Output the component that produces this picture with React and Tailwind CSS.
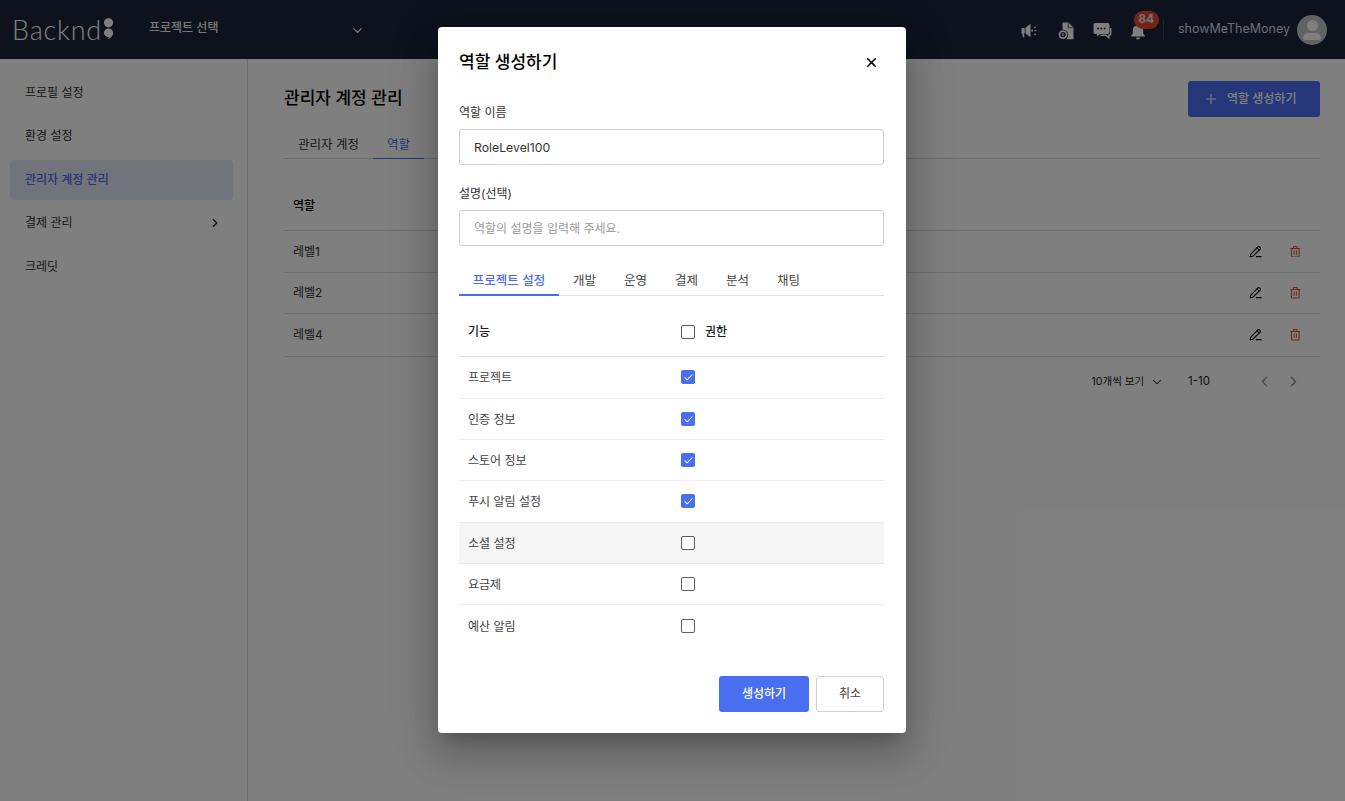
import React from "react";
import { ChevronDown, ChevronRight, ChevronLeft, Plus, X, Check } from "lucide-react";

const Megaphone = () => (
  <svg width="20" height="20" viewBox="0 0 20 20" fill="#fff" className="block">
    <path d="M2.5 7h3.2v5.5H4.9l.6 3.7H3.9L3.3 12.5h-.8z" />
    <path d="M6.5 6.8 11.5 2.8v13.4l-5-3.6z" />
    <rect x="12.4" y="8.5" width="1.5" height="2.2" />
    <rect x="15.4" y="9.1" width="2.2" height="1.1" />
    <rect x="14.8" y="5.8" width="2.2" height="1.1" transform="rotate(-30 15.8 6.3)" />
    <rect x="14.8" y="12.6" width="2.2" height="1.1" transform="rotate(30 15.8 13.2)" />
  </svg>
);
const FileCoin = () => (
  <svg width="20" height="20" viewBox="0 0 20 20" fill="#fff" className="block">
    <path d="M6.5 1.5h6l5 5v11.7h-7A6 6 0 0 0 6.5 9z" />
    <path d="M12.2 2v4.8H17" fill="none" stroke="#1a2438" strokeWidth="0.8" />
    <circle cx="7" cy="13.6" r="5.2" fill="#1a2438" />
    <circle cx="7" cy="13.6" r="4.4" />
    <circle cx="7" cy="13.6" r="2.6" fill="#1a2438" />
    <rect x="6.4" y="12" width="1.2" height="3.2" />
  </svg>
);
const Chat = () => (
  <svg width="20" height="20" viewBox="0 0 20 20" className="block">
    <path fill="#fff" d="M3.3 2h12.4A1.8 1.8 0 0 1 17.5 3.8v7.4a1.8 1.8 0 0 1-1.8 1.8H8l-3 2.6V13H3.3a1.8 1.8 0 0 1-1.8-1.8V3.8A1.8 1.8 0 0 1 3.3 2z" />
    <circle cx="6" cy="7.4" r="1" fill="#1a2438" />
    <circle cx="9.3" cy="7.4" r="1" fill="#1a2438" />
    <circle cx="12.6" cy="7.4" r="1" fill="#1a2438" />
    <path fill="none" stroke="#fff" strokeWidth="1.4" d="M18.7 7v6.2a1 1 0 0 1-1 1h-.9v2.6l-2.8-2.6H8.5" />
  </svg>
);
const Bell = () => (
  <svg width="20" height="20" viewBox="0 0 20 20" fill="#fff" className="block">
    <path d="M10 2.4a1.3 1.3 0 0 1 1.3 1.3v.6c2.4.6 3.9 2.6 3.9 5.1v3.4l1.6 1.8v.8H3.2v-.8l1.6-1.8V9.4c0-2.5 1.5-4.5 3.9-5.1v-.6A1.3 1.3 0 0 1 10 2.4z" />
    <path d="M8 16.5h4a2 2 0 0 1-4 0z" />
  </svg>
);
const Pen = () => (
  <svg width="13" height="13" viewBox="0 0 14 14" fill="none" stroke="#000" strokeWidth="1.15" strokeLinejoin="round" strokeLinecap="round" className="block -mt-[1px]">
    <path d="M1.3 12.7l.6-3L9.6 2a1.2 1.2 0 0 1 1.7 0l.7.7a1.2 1.2 0 0 1 0 1.7l-7.7 7.7z" />
    <path d="M8.6 3l2.4 2.4" />
    <path d="M8 12.6h5" strokeWidth="1.3" />
  </svg>
);
const Trash = () => (
  <svg width="10.5" height="11.5" viewBox="0 0 12 13" fill="none" stroke="#e04a36" strokeWidth="1.2" className="block">
    <path d="M.5 2.7h11M4 2.5V1a.5.5 0 0 1 .5-.5h3A.5.5 0 0 1 8 1v1.5" />
    <path d="M1.6 2.7v8.8a1 1 0 0 0 1 1h6.8a1 1 0 0 0 1-1V2.7" />
    <path d="M4.7 5.2v4.8M7.3 5.2v4.8" />
  </svg>
);

const Cb = ({ on }) =>
  on ? (
    <span className="w-[14px] h-[14px] rounded-[2px] bg-[#4a6ef0] flex items-center justify-center shrink-0">
      <Check size={11} color="#fff" strokeWidth={2.2} />
    </span>
  ) : (
    <span className="w-[14px] h-[14px] rounded-[2px] border border-[#5f5f5f] bg-white shrink-0" />
  );

const side = ["프로필 설정", "환경 설정", "관리자 계정 관리", "결제 관리", "크레딧"];
const roles = [
  ["레벨1", "h-[42px]"],
  ["레벨2", "h-[41px]"],
  ["레벨4", "h-[43px]"],
];
const perm = [
  ["프로젝트", true, "h-[42px] pb-[1px] border-b border-[#ececec]"],
  ["인증 정보", true, "h-[41px] border-b border-[#ececec]"],
  ["스토어 정보", true, "h-[41px] border-b border-[#ececec]"],
  ["푸시 알림 설정", true, "h-[42px] pb-[1px] border-b border-[#ececec]"],
  ["소셜 설정", false, "h-[41px] border-b border-[#ececec] bg-[#f6f6f6]"],
  ["요금제", false, "h-[41px] border-b border-[#ececec]"],
  ["예산 알림", false, "h-[42px]"],
];
const font = "font-['Inter','Noto_Sans_CJK_KR',sans-serif]";

export default function App() {
  return (
    <div className={`relative h-[801px] w-[1345px] overflow-hidden bg-white text-[#222] ${font}`}>
      <header className="h-[59px] bg-[#1a2438] flex items-center text-white">
        <div className="w-[137px] pl-[12px] flex items-center shrink-0">
          <span className="font-['Lato',sans-serif] font-light text-[27px] leading-none tracking-[0.8px] text-white">Backnd</span>
          <svg width="13" height="22" viewBox="0 0 13 22" className="ml-[0px] -mt-[1px]" fill="#fff">
            <circle cx="6.5" cy="4.8" r="4.6" />
            <path d="M6.5 10.5a4.6 4.6 0 0 1 4.6 4.6c0 3-2.6 5.2-5.6 6 1-1 1.4-1.6 1.4-2.1a4.4 4.4 0 0 1-5-3.9 4.6 4.6 0 0 1 4.6-4.6z" />
          </svg>
        </div>
        <div className="w-[224px] flex items-center justify-between pl-[12px] shrink-0 -mt-[3px]">
          <span className="text-[12px] font-medium text-[#f0f0f0]">프로젝트 선택</span>
          <ChevronDown size={15} color="#fff" strokeWidth={2} className="mt-[5px] -mr-[4px]" />
        </div>
        <div className="ml-auto flex items-center">
          <span className="mr-[17px] mt-[2px]"><Megaphone /></span>
          <span className="mr-[16px] mt-[2px]"><FileCoin /></span>
          <span className="mr-[16px] mt-[2px]"><Chat /></span>
          <span className="relative mr-[15px] mt-[2px]">
            <Bell />
            <span className="absolute -top-[10px] left-[6px] w-[25px] h-[18px] rounded-full bg-[#e8492f] text-[11.5px] font-bold tracking-[0.3px] flex items-center justify-center text-[#e8e8e8]">84</span>
          </span>
          <span className="w-px h-[21px] bg-[#3c4557] mr-[14px]" />
          <span className="text-[12.5px] text-[#d5dbe6] mr-[7px]">showMeTheMoney</span>
          <span className="w-[30px] h-[30px] rounded-full bg-[#c4c4c4] flex flex-col items-center justify-center mr-[18px] overflow-hidden">
            <span className="w-[11px] h-[11px] rounded-full bg-white" />
            <span className="w-[18px] h-[7px] rounded-t-[8px] rounded-b-[3px] bg-white mt-[2px]" />
          </span>
        </div>
      </header>

      <div className="flex h-[742px]">
        <aside className="w-[248px] border-r border-[#d8d8d8] pl-[10px] pr-[14px] pt-[14px] shrink-0 text-[12px]">
          {side.map((s, i) => (
            <div
              key={s}
              className={`h-[40px] mb-[3.4px] flex items-center justify-between pl-[15px] pr-[11px] rounded-[4px] ${i === 2 ? "bg-[#e4e8f7] text-[#4a6ef0] font-medium" : "text-[#333]"}`}
            >
              <span>{s}</span>
              {i === 3 && <ChevronRight size={14} color="#222" strokeWidth={2} />}
            </div>
          ))}
        </aside>

        <main className="flex-1 pl-[36px] pr-[25px] pt-[22px] min-w-0">
          <div className="flex items-start justify-between h-[49px]">
            <h1 className="text-[17px] font-medium text-black mt-[3px] leading-[28px]">관리자 계정 관리</h1>
            <button className="w-[132px] h-[36px] rounded-[3px] bg-[#4a6ef0] text-white text-[12px] font-medium flex items-center pl-[15px] gap-[8px]">
              <Plus size={16} strokeWidth={1.6} />
              <span>역할 생성하기</span>
            </button>
          </div>
          <div className="flex border-b border-[#d8d8d8] h-[29px] text-[12.5px]">
            <span className="px-[14px] leading-[29px] text-[#333]">관리자 계정</span>
            <span className="w-[51px] text-center leading-[29px] text-[#4a6ef0] border-b-[1.5px] border-[#4a6ef0] h-[29px]">역할</span>
          </div>
          <div className="h-[72px] border-b border-[#d8d8d8] pl-[9px] pt-[23px] flex items-center text-[12px] font-medium text-black">역할</div>
          {roles.map(([r, h]) => (
            <div key={r} className={`${h} border-b border-[#dedede] pl-[9px] pr-[20px] flex items-center justify-between text-[12px] text-[#333]`}>
              <span>{r}</span>
              <span className="flex items-center gap-[28px]">
                <Pen />
                <Trash />
              </span>
            </div>
          ))}
          <div className="flex items-center justify-end h-[49px] text-[11px] text-[#222] pr-[18px]">
            <span className="text-[10.5px]">10개씩 보기</span>
            <ChevronDown size={14} color="#222" strokeWidth={1.8} className="ml-[6px] mr-[24px]" />
            <span className="text-[11.5px] mr-[46px]">1-10</span>
            <ChevronLeft size={17} color="#999" strokeWidth={2} className="mr-[12px]" />
            <ChevronRight size={17} color="#888" strokeWidth={2} />
          </div>
        </main>
      </div>

      <div className="absolute inset-0 bg-black/50" />

      <section className="absolute left-[438px] top-[27px] w-[468px] h-[706px] bg-white rounded-[4px] pl-[21px] pr-[22px] pt-[22px] text-[#222] shadow-[0_11px_15px_-7px_rgba(0,0,0,0.2),0_24px_38px_3px_rgba(0,0,0,0.14),0_9px_46px_8px_rgba(0,0,0,0.12)]">
        <div className="flex items-center justify-between h-[26px]">
          <h2 className="text-[17px] font-medium text-black leading-none">역할 생성하기</h2>
          <X size={15} color="#000" strokeWidth={2.6} className="mr-[5px]" />
        </div>
        <label className="block text-[12px] text-[#333] mt-[29px] leading-[18px]">역할 이름</label>
        <div className="mt-[7px] h-[36px] w-full border border-[#cfcfcf] rounded-[3px] flex items-center pl-[14px] pt-[2px] text-[12.25px] text-[#333]">RoleLevel100</div>
        <label className="block text-[12px] text-[#333] mt-[20px] leading-[18px]">설명(선택)</label>
        <div className="mt-[7px] h-[36px] w-full border border-[#cfcfcf] rounded-[3px] flex items-center pl-[14px] pt-[2px] text-[12px] text-[#9a9a9a]">역할의 설명을 입력해 주세요.</div>

        <div className="mt-[22px] h-[28px] flex border-b border-[#e0e0e0] text-[12.5px] text-[#444]">
          <span className="w-[100px] h-[28px] text-center leading-[26px] font-medium text-[#4a6ef0] border-b-2 border-[#4a6ef0]">프로젝트 설정</span>
          {["개발", "운영", "결제", "분석", "채팅"].map((t) => (
            <span key={t} className="px-[14px] leading-[26px]">{t}</span>
          ))}
        </div>

        <div className="h-[61px] pt-[12px] border-b border-[#e0e0e0] flex items-center text-[12px] font-medium text-[#222]">
          <span className="w-[222px] pl-[9px]">기능</span>
          <Cb />
          <span className="ml-[10px]">권한</span>
        </div>
        {perm.map(([t, on, c]) => (
          <div key={t} className={`${c} flex items-center text-[12px] text-[#444]`}>
            <span className="w-[222px] pl-[9px] pt-[1px]">{t}</span>
            <Cb on={on} />
          </div>
        ))}

        <div className="mt-[29px] flex justify-end gap-[7px] text-[12px]">
          <button className="w-[90px] h-[36px] bg-[#4a6ef0] rounded-[3px] text-white font-medium">생성하기</button>
          <button className="w-[68px] h-[36px] border border-[#cfcfcf] rounded-[3px] bg-white text-[#444]">취소</button>
        </div>
      </section>
    </div>
  );
}
